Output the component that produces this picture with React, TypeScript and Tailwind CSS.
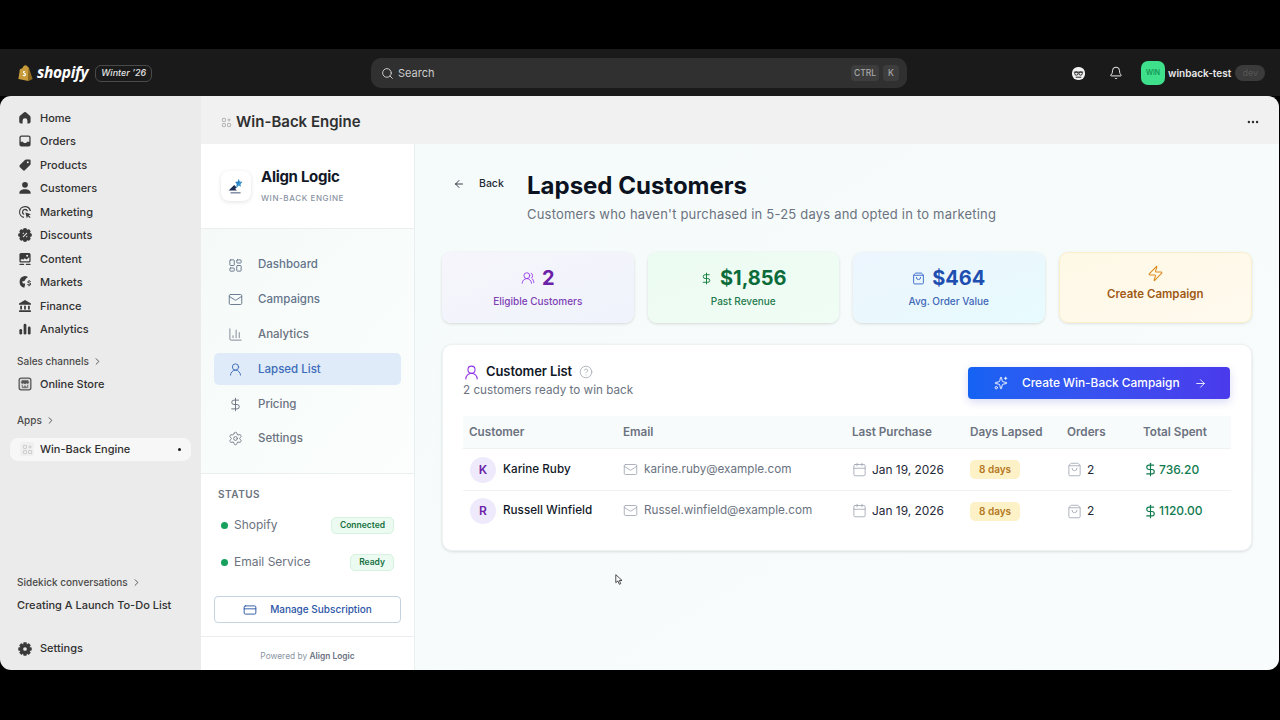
import React from "react";
import {
  ArrowLeft, ArrowRight, Bell, Calendar, ChartColumn, ChevronRight, CircleHelp, CreditCard, DollarSign,
  Ellipsis, LayoutDashboard, Mail, Search, Settings, ShoppingBag, Sparkles, UserRound, UsersRound, Zap,
} from "lucide-react";

type P = { className?: string };
const S = ({ className, children }: P & { children: React.ReactNode }) => (
  <svg viewBox="0 0 20 20" fill="currentColor" fillRule="evenodd" className={className ?? "w-4 h-4"}>{children}</svg>
);

const Gear = ({ className }: P) => (
  <S className={className}>
    {[0, 45, 90, 135, 180, 225, 270, 315].map((a) => (
      <rect key={a} x="7.8" y="1.6" width="4.4" height="4" rx="1" transform={`rotate(${a} 10 10)`} />
    ))}
    <path d="M10 3.6a6.4 6.4 0 1 1 0 12.8 6.4 6.4 0 0 1 0-12.8zM10 7.7a2.3 2.3 0 1 0 0 4.6 2.3 2.3 0 0 0 0-4.6z" />
  </S>
);

const navIcons: Record<string, React.ReactNode> = {
  Home: <S><path d="M8.9 2.9a1.7 1.7 0 0 1 2.2 0l5 4.3c.6.5.9 1.2.9 2v5.6a2.2 2.2 0 0 1-2.2 2.2H13v-3.6a3 3 0 0 0-6 0V17H5a2.2 2.2 0 0 1-2.2-2.2V9.2c0-.8.3-1.5.9-2z" /></S>,
  Orders: <S><path d="M5.5 3h9A2.5 2.5 0 0 1 17 5.5v9a2.5 2.5 0 0 1-2.5 2.5h-9A2.5 2.5 0 0 1 3 14.5v-9A2.5 2.5 0 0 1 5.5 3zM4.6 10.8h2.9l1 1.6h3l1-1.6h2.9V5.5a.9.9 0 0 0-.9-.9h-9a.9.9 0 0 0-.9.9z" /></S>,
  Products: <S><path d="M11.3 3h4.2A1.5 1.5 0 0 1 17 4.5v4.2a2 2 0 0 1-.6 1.4l-6.3 6.3a2 2 0 0 1-2.8 0l-3.7-3.7a2 2 0 0 1 0-2.8l6.3-6.3A2 2 0 0 1 11.3 3zM13.5 5.3a1.2 1.2 0 1 0 0 2.4 1.2 1.2 0 0 0 0-2.4z" /></S>,
  Customers: <S><circle cx="10" cy="6" r="3.6" /><path d="M3 17.2v-1.4c0-2.7 3.1-4.3 7-4.3s7 1.6 7 4.3v1.4z" /></S>,
  Marketing: <S><path d="M10 2.5a7.5 7.5 0 0 1 7.4 6.3h-1.6A6 6 0 1 0 8.8 15.9v1.5A7.5 7.5 0 0 1 10 2.5zM10 6a4 4 0 0 1 3.9 3h-1.7A2.4 2.4 0 1 0 9 12.2v1.6A4 4 0 0 1 10 6z" /><path d="M10.5 10.5l7 2.4-2.9 1.3 2.4 2.4-1 1-2.4-2.4-1.3 2.9z" /></S>,
  Discounts: <S>
    {[0, 45, 90, 135, 180, 225, 270, 315].map((a) => <circle key={a} cx="10" cy="3.9" r="2.6" transform={`rotate(${a} 10 10)`} />)}
    <path d="M10 3.5a6.5 6.5 0 1 1 0 13 6.5 6.5 0 0 1 0-13zM12.2 6.9L6.9 12.2l.9.9 5.3-5.3zM7.7 6.9a1 1 0 1 0 0 2 1 1 0 0 0 0-2zM12.3 11.1a1 1 0 1 0 0 2 1 1 0 0 0 0-2z" />
  </S>,
  Content: <S><path d="M5 2.5h10A2 2 0 0 1 17 4.5v8a2 2 0 0 1-2 2H5a2 2 0 0 1-2-2v-8a2 2 0 0 1 2-2zM4.6 10.8v1.5c0 .4.3.6.6.6h9.6c.3 0 .6-.2.6-.6V7.5l-3.4 3.2-2.3-1.5-2 1.6-1.2-.7zM12.7 4.6a1.3 1.3 0 1 0 0 2.6 1.3 1.3 0 0 0 0-2.6z" /><rect x="3" y="16" width="6" height="1.6" rx=".8" /><rect x="11" y="16" width="6" height="1.6" rx=".8" /></S>,
  Markets: <S><path d="M9.5 2.5c1.6 0 3 .5 4.2 1.3l-2.6 2-1.8 2.8-3 .7 1.2 2.6h2.6v1.5l-1 3.8a7.5 7.5 0 0 1 .4-14.7z" /><path d="M14.5 7.4h1.3v1c1 .2 1.6.8 1.7 1.7h-1.4c-.1-.4-.4-.6-1-.6s-.9.2-.9.6c0 .9 3.4.3 3.4 2.5 0 .9-.7 1.5-1.8 1.7v1h-1.3v-1c-1-.2-1.8-.9-1.8-1.9h1.4c.1.5.5.8 1.1.8s1.1-.2 1.1-.6c0-1-3.3-.3-3.3-2.5 0-.9.6-1.5 1.5-1.7z" /></S>,
  Finance: <S><path d="M10 2.5l7.5 4.3v1.7h-15V6.8zM4 9.7h2.2v4.6H4zM8.9 9.7h2.2v4.6H8.9zM13.8 9.7H16v4.6h-2.2z" /><rect x="2.5" y="15.2" width="15" height="2.3" rx=".6" /></S>,
  Analytics: <S><rect x="3" y="10" width="3.4" height="7" rx="1.7" /><rect x="8.3" y="3.5" width="3.4" height="13.5" rx="1.7" /><rect x="13.6" y="7" width="3.4" height="10" rx="1.7" /></S>,
  "Online Store": <svg viewBox="0 0 20 20" className="w-4 h-4 text-[#555]" fill="none" stroke="currentColor">
    <rect x="2.7" y="2.7" width="14.6" height="14.6" rx="2.5" strokeWidth="1.6" fill="#dcdcdc" />
    <path d="M6.2 5.6h7.6l.9 2.6a1.6 1.6 0 0 1-3 .4 1.9 1.9 0 0 1-3.4 0 1.6 1.6 0 0 1-3-.4z" fill="currentColor" strokeWidth=".6" />
    <path d="M6.6 11v3.6h6.8V11M9 14.5v-2h2v2" strokeWidth="1" />
  </svg>,
};

const BlockIcon = ({ className }: P) => (
  <svg viewBox="0 0 16 16" fill="none" stroke="currentColor" strokeWidth="1.2" className={className}>
    <rect x="2" y="2" width="4.5" height="4.5" rx=".8" />
    <rect x="2" y="9.5" width="4.5" height="4.5" rx=".8" />
    <rect x="9.5" y="9.5" width="4.5" height="4.5" rx=".8" />
    <path d="M11.75 2v4.5M9.5 4.25H14" />
  </svg>
);

const mainNav = ["Home", "Orders", "Products", "Customers", "Marketing", "Discounts", "Content", "Markets", "Finance", "Analytics"];

const NavRow = ({ label }: { label: string }) => (
  <div className="flex items-center h-[23.5px] pl-[17px] gap-[7px] text-[11px] font-medium text-[#303030]">
    <span className="text-[#3a3a3a]">{navIcons[label]}</span>
    <span>{label}</span>
  </div>
);

const SectionLabel = ({ label, className }: { label: string; className?: string }) => (
  <div className={`flex items-center h-5 pl-[17px] gap-[3px] text-[10px] font-medium text-[#4a4a4a] ${className ?? ""}`}>
    <span>{label}</span>
    <ChevronRight className="w-[11px] h-[11px]" strokeWidth={2} />
  </div>
);

const Sidebar = () => (
  <aside className="w-[201px] shrink-0 bg-[#ebebeb] flex flex-col pt-[10px] pb-[10px]">
    {mainNav.map((n) => <NavRow key={n} label={n} />)}
    <SectionLabel label="Sales channels" className="mt-[10px]" />
    <div className="mt-[1px]"><NavRow label="Online Store" /></div>
    <SectionLabel label="Apps" className="mt-[15px]" />
    <div className="mt-[7px] mx-[10px] h-[23px] bg-[#f7f7f7] rounded-[8px] flex items-center pl-[10px] pr-[10px] gap-[10px] text-[11px] font-medium text-[#303030]">
      <span className="w-[14px] h-[14px] rounded-[3px] bg-[#f0f0f0] flex items-center justify-center">
        <BlockIcon className="w-[11px] h-[11px] text-[#c4c4c4]" />
      </span>
      <span className="flex-1 -ml-[4px]">Win-Back Engine</span>
      <span className="w-[3px] h-[3px] rounded-full bg-[#1a1a1a]" />
    </div>
    <SectionLabel label="Sidekick conversations" className="mt-auto" />
    <div className="mt-[2px] h-[23px] flex items-center pl-[17px] text-[11px] font-medium text-[#303030]">Creating A Launch To-Do List</div>
    <div className="mt-[20px] flex items-center h-[23px] pl-[17px] gap-[7px] text-[11px] font-medium text-[#303030]">
      <Gear className="w-4 h-4 text-[#3a3a3a]" />
      <span>Settings</span>
    </div>
  </aside>
);

const appNav: { label: string; icon: React.ReactNode; active?: boolean; color?: string }[] = [
  { label: "Dashboard", icon: <LayoutDashboard className="w-[15px] h-[15px]" strokeWidth={1.5} />, color: "text-[#64748b]" },
  { label: "Campaigns", icon: <Mail className="w-[15px] h-[15px]" strokeWidth={1.5} />, color: "text-[#64748b]" },
  { label: "Analytics", icon: <ChartColumn className="w-[15px] h-[15px]" strokeWidth={1.3} />, color: "text-[#6b7280]" },
  { label: "Lapsed List", icon: <UserRound className="w-[15px] h-[15px]" strokeWidth={1.5} />, active: true },
  { label: "Pricing", icon: <DollarSign className="w-[15px] h-[15px]" strokeWidth={1.5} />, color: "text-[#6b7280]" },
  { label: "Settings", icon: <Settings className="w-[15px] h-[15px]" strokeWidth={1.4} />, color: "text-[#6b7280]" },
];

const StatusRow = ({ label, pill, className }: { label: string; pill: string; className?: string }) => (
  <div className={`flex items-center ml-[20px] mr-[20px] h-[18px] ${className ?? ""}`}>
    <span className="w-[7px] h-[7px] rounded-full bg-[#16a05d]" />
    <span className="ml-[6px] flex-1 text-[12px] text-[#6b7280]">{label}</span>
    <span className="h-[17px] px-[8px] flex items-center rounded-[5px] bg-[#ecfbf1] border border-[#d6f2e0] text-[8.5px] font-semibold text-[#15703f]">{pill}</span>
  </div>
);

const AppSidebar = () => (
  <div className="w-[214px] shrink-0 bg-[#fdfefe] border-r border-[#e9eef0] flex flex-col">
    <div className="h-[85px] shrink-0 border-b border-[#eaeef0] flex items-center pl-[20px] gap-[10px] bg-white">
      <div className="w-[30px] h-[30px] rounded-[8px] bg-white shadow-[0_1px_4px_rgba(0,0,0,0.12)] flex items-center justify-center">
        <svg viewBox="0 0 24 24" className="w-[22px] h-[22px]">
          <path d="M15 4l1 3 3 .5-2.2 2.2.6 3-2.6-1.5-2.6 1.5.6-3L11 7.5 14 7z" fill="#2a7fc4" />
          <path d="M4 17l6-6 3 3-2 1 2 2z" fill="#1c2b52" />
          <path d="M13 13l4-5" stroke="#3aa0d8" strokeWidth="1.2" />
          <rect x="6" y="19" width="11" height="1" fill="#33456e" />
        </svg>
      </div>
      <div className="flex flex-col -mt-[1px]">
        <span className="text-[15px] leading-[20px] font-bold tracking-[-0.3px] text-[#111827]">Align Logic</span>
        <span className="mt-[5px] text-[8px] leading-[12px] font-medium tracking-[0.6px] text-[#8b94a3]">WIN-BACK ENGINE</span>
      </div>
    </div>
    <div className="h-[245px] shrink-0 border-b border-[#eaeef0] pt-[20px] px-[13px] flex flex-col gap-[2.8px] bg-gradient-to-br from-[#f5faf9] to-[#fbfefc]">
      {appNav.map((n) => (
        <div key={n.label} className={`h-8 rounded-[5px] flex items-center pl-[14px] gap-[15px] text-[11.5px] font-medium ${n.active ? "bg-[#e0ebf9] text-[#3d6cb8]" : n.color}`}>
          {n.icon}
          <span>{n.label}</span>
        </div>
      ))}
    </div>
    <div className="flex-1 flex flex-col bg-white">
      <div className="mt-[14px] ml-[17px] h-[13px] leading-[13px] text-[10px] font-semibold tracking-[0.5px] text-[#6b7280]">STATUS</div>
      <StatusRow label="Shopify" pill="Connected" className="mt-[15px]" />
      <StatusRow label="Email Service" pill="Ready" className="mt-[19px]" />
      <div className="mt-[25px] mx-[13px] h-[27px] rounded-[4px] border border-[#c4d3df] bg-white flex items-center justify-center gap-[13px] text-[10px] font-medium text-[#2b55a6]">
        <CreditCard className="w-[14px] h-[14px]" strokeWidth={1.6} />
        <span>Manage Subscription</span>
      </div>
      <div className="mt-[13px] flex-1 border-t border-[#eaeef0] pt-[5px] flex items-center justify-center text-[8.4px] text-[#8b94a3]">
        <span>Powered by <span className="font-semibold text-[#6b7280]">Align Logic</span></span>
      </div>
    </div>
  </div>
);

const StatCard = ({ icon, value, label, valueColor, labelColor, bg }: { icon: React.ReactNode; value: string; label: string; valueColor: string; labelColor: string; bg: string }) => (
  <div className={`flex-1 h-[71px] rounded-[9px] shadow-[0_1px_3px_rgba(0,0,0,0.14)] flex flex-col items-center pt-[14px] ${bg}`}>
    <div className="flex items-center gap-[7px] h-[24px]">
      {icon}
      <span className={`text-[20px] font-bold ${valueColor}`}>{value}</span>
    </div>
    <span className={`mt-[3px] text-[10px] leading-4 font-medium ${labelColor}`}>{label}</span>
  </div>
);

const gridCols = "grid grid-cols-[154px_229px_118px_97px_76px_1fr] pl-[6px] items-center";

const CustomerRow = ({ initial, name, email, amount, border }: { initial: string; name: string; email: string; amount: string; border?: boolean }) => (
  <div className={`${gridCols} h-[41px] text-[11.7px] ${border ? "border-t border-[#eef2f3]" : ""}`}>
    <div className="flex items-center gap-[7px]">
      <span className="ml-[1px] w-[26px] h-[26px] rounded-full bg-[#eeeafb] flex items-center justify-center text-[12px] font-semibold text-[#6b21a8]">{initial}</span>
      <span className="font-medium text-[#111827]">{name}</span>
    </div>
    <div className="flex items-center gap-[6px] text-[#6b7280]">
      <Mail className="w-[15px] h-[15px] text-[#9ca3af]" strokeWidth={1.3} />
      <span>{email}</span>
    </div>
    <div className="flex items-center gap-[5px] text-[#1f2937] text-[11.9px]">
      <Calendar className="w-[15px] h-[15px] text-[#9ca3af]" strokeWidth={1.3} />
      <span>Jan 19, 2026</span>
    </div>
    <div><span className="inline-flex items-center h-[19px] px-[9px] rounded-[5px] bg-[#fdf1c7] text-[10px] font-semibold text-[#b4781f]">8 days</span></div>
    <div className="flex items-center gap-[5px] text-[#1f2937] text-[12px]">
      <ShoppingBag className="w-[15px] h-[15px] text-[#9ca3af]" strokeWidth={1.3} />
      <span>2</span>
    </div>
    <div className="flex items-center gap-[1px] font-medium text-[#0f7a4e] text-[12px]">
      <DollarSign className="w-[15px] h-[15px]" strokeWidth={1.8} />
      <span>{amount}</span>
    </div>
  </div>
);

const Content = () => (
  <div className="relative flex-1 bg-gradient-to-br from-[#f5fbfa] to-[#f8fcfc] px-[27px] pt-[26px]">
    <div className="flex">
      <div className="flex items-center h-[28px] pl-[11px] w-[85px] text-[#1f2937]">
        <ArrowLeft className="w-[12px] h-[12px]" strokeWidth={1.8} />
        <span className="ml-[14px] text-[10.5px] font-medium">Back</span>
      </div>
      <div className="flex flex-col">
        <h1 className="text-[24px] leading-[32px] font-bold text-[#0b1220]">Lapsed Customers</h1>
        <p className="mt-[2px] text-[13px] leading-[20px] tracking-[0.2px] text-[#6b7280]">Customers who haven't purchased in 5-25 days and opted in to marketing</p>
      </div>
    </div>
    <div className="mt-[28px] flex gap-[14px]">
      <StatCard icon={<UsersRound className="w-[14px] h-[14px] text-[#9333ea]" strokeWidth={1.5} />} value="2" label="Eligible Customers" valueColor="text-[#6b21a8]" labelColor="text-[#7e3fb5]" bg="bg-gradient-to-br from-[#f7f5fc] to-[#eff3fb]" />
      <StatCard icon={<DollarSign className="w-[13px] h-[13px] text-[#15803d]" strokeWidth={1.8} />} value="$1,856" label="Past Revenue" valueColor="text-[#0b6b3a]" labelColor="text-[#1f7a4d]" bg="bg-gradient-to-br from-[#ecfbf2] to-[#f0fdf5]" />
      <StatCard icon={<ShoppingBag className="w-[13px] h-[13px] text-[#2b5fc4]" strokeWidth={1.6} />} value="$464" label="Avg. Order Value" valueColor="text-[#1e4fb0]" labelColor="text-[#3f68b8]" bg="bg-gradient-to-br from-[#edf5fd] to-[#e7fbfe]" />
      <div className="flex-1 h-[71px] rounded-[9px] border border-[#faeecb] shadow-[0_1px_3px_rgba(0,0,0,0.1)] bg-gradient-to-br from-[#fef8e6] to-[#fffaee] flex flex-col items-center justify-center pb-[6px]">
        <Zap className="w-[17px] h-[17px] text-[#dd8a1d]" strokeWidth={1.5} />
        <span className="mt-[4px] text-[11.5px] font-semibold text-[#a05a16]">Create Campaign</span>
      </div>
    </div>
    <div className="mt-[21px] h-[207px] rounded-[10px] bg-white border border-[#eef2f3] shadow-[0_1px_3px_rgba(0,0,0,0.12)] px-[20px] pt-[18px]">
      <div className="flex items-start justify-between">
        <div className="flex flex-col">
          <div className="flex items-center h-[18px]">
            <UserRound className="w-[17px] h-[17px] text-[#9333ea]" strokeWidth={1.5} />
            <span className="ml-[6px] text-[13px] font-semibold tracking-[-0.1px] text-[#111827]">Customer List</span>
            <CircleHelp className="ml-[7px] w-[14px] h-[14px] text-[#a3a9b3]" strokeWidth={1.4} />
          </div>
          <span className="mt-[1px] text-[11.7px] leading-[16px] text-[#6b7280]">2 customers ready to win back</span>
        </div>
        <div className="mt-[4px] mr-[1px] w-[262px] h-[32px] rounded-[4px] bg-gradient-to-r from-[#1463f3] to-[#4a3aec] shadow-[0_3px_8px_rgba(60,70,200,0.2)] flex items-center pl-[26px] text-white">
          <Sparkles className="w-[14px] h-[14px]" strokeWidth={1.6} />
          <span className="ml-[14px] text-[11.9px] font-medium">Create Win-Back Campaign</span>
          <ArrowRight className="ml-[14px] w-[13px] h-[13px]" strokeWidth={1.6} />
        </div>
      </div>
      <div className="mt-[17px]">
        <div className={`${gridCols} h-[33px] pt-[2px] bg-[#f8fbfb] border-b border-[#eef2f3] text-[11.7px] font-semibold text-[#6b7280]`}>
          <span>Customer</span><span>Email</span><span>Last Purchase</span><span>Days Lapsed</span><span>Orders</span><span>Total Spent</span>
        </div>
        <CustomerRow initial="K" name="Karine Ruby" email="karine.ruby@example.com" amount="736.20" />
        <CustomerRow initial="R" name="Russell Winfield" email="Russel.winfield@example.com" amount="1120.00" border />
      </div>
    </div>
    <svg viewBox="0 0 10 14" className="absolute left-[200px] top-[429px] w-[8px] h-[13px]">
      <path d="M1 1v10l2.6-2.2L5.4 13l1.8-.8-1.8-4h3.4z" fill="#fff" stroke="#222" strokeWidth="1" />
    </svg>
  </div>
);

export default function App() {
  return (
    <div className="w-[1280px] h-[720px] bg-black flex flex-col overflow-hidden font-['Inter',sans-serif]">
      <div className="h-[49px] shrink-0 bg-black" />
      <header className="h-[47px] shrink-0 bg-[#1a1a1a] flex items-center relative pt-[1px]">
        <div className="flex items-center ml-[18px] w-[353px]">
          <svg viewBox="0 0 20 22" className="w-[15px] h-[18px]">
            <path d="M14.5 3.5L13 3c-.5-1.5-1.5-2.5-3-2.5-2 0-3.5 1.8-4.2 4.2L2.5 6 .5 19 14 21.5z" fill="#c79a3a" />
            <path d="M14.5 3.5L19.5 19 14 21.5z" fill="#8f6a1e" />
            <path d="M9.5 8.5c-2-.6-3 .5-3 1.6 0 1.8 2.6 1.8 2.6 3 0 .9-1.5.8-2.6.1l-.4 1.5c1.8 1 4.6.8 4.6-1.8 0-2-2.5-2.2-2.5-3 0-.5.7-.7 1.6-.3z" fill="#fff" />
          </svg>
          <span className="ml-[4px] text-[15.5px] font-bold italic tracking-[-0.3px] text-white font-['Open_Sans',sans-serif]">shopify</span>
          <span className="ml-[7px] h-[17px] px-[5px] flex items-center rounded-[6px] border border-[#4a4a4a] text-[9px] italic font-medium text-[#e3e3e3]">Winter ’26</span>
        </div>
        <div className="w-[536px] h-[30px] rounded-[10px] bg-[#303030] flex items-center pl-[10px] pr-[8px] text-[#cccccc]">
          <Search className="w-[13px] h-[13px]" strokeWidth={1.8} />
          <span className="ml-[4px] text-[11px]">Search</span>
          <span className="ml-auto h-[16px] w-[28px] rounded-[4px] bg-[#3d3d3d] flex items-center justify-center text-[8.5px] font-medium text-[#a8a8a8]">CTRL</span>
          <span className="ml-[4px] h-[16px] w-[16px] rounded-[4px] bg-[#3d3d3d] flex items-center justify-center text-[8.5px] font-medium text-[#a8a8a8]">K</span>
        </div>
        <div className="ml-[165px] w-[13px] h-[13px] rounded-[6px] bg-[#f2f2f2] flex items-center justify-center">
          <svg viewBox="0 0 14 14" className="w-[13px] h-[13px]">
            <path d="M2 5h10v1H2z" fill="#1a1a1a" />
            <circle cx="4.7" cy="7" r="1.8" fill="none" stroke="#1a1a1a" strokeWidth="1" />
            <circle cx="9.3" cy="7" r="1.8" fill="none" stroke="#1a1a1a" strokeWidth="1" />
            <path d="M4 11h6" stroke="#1a1a1a" strokeWidth="1" />
          </svg>
        </div>
        <Bell className="ml-[24px] w-[14px] h-[14px] text-[#f0f0f0]" strokeWidth={1.7} />
        <div className="ml-[18px] w-[24px] h-[24px] rounded-[7px] bg-[#3fe08c] flex items-center justify-center text-[7px] font-medium text-[#0e8f4f]">WIN</div>
        <span className="ml-[3px] text-[10px] font-semibold text-[#e8e8e8]">winback-test</span>
        <span className="ml-[4px] h-[16px] w-[30px] rounded-full bg-[#3b3b3b] flex items-center justify-center text-[9px] text-[#575757]">dev</span>
      </header>
      <main className="h-[574px] w-[1279px] shrink-0 rounded-[11px] overflow-hidden flex">
        <Sidebar />
        <div className="flex-1 flex flex-col min-w-0">
          <div className="h-12 shrink-0 bg-[#f1f1f1] flex items-center pl-[20px] pr-[19px] pt-[4px]">
            <BlockIcon className="w-[11px] h-[11px] text-[#a8a8a8]" />
            <span className="ml-[4px] text-[15px] font-semibold text-[#303030]">Win-Back Engine</span>
            <Ellipsis className="ml-auto w-[14px] h-[14px] text-[#303030]" strokeWidth={2.2} />
          </div>
          <div className="flex-1 flex min-h-0">
            <AppSidebar />
            <Content />
          </div>
        </div>
      </main>
    </div>
  );
}
